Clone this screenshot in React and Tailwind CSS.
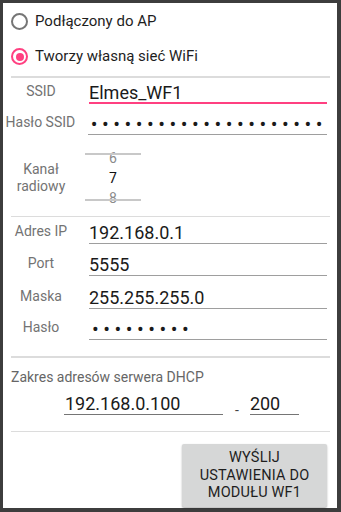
import React from "react";

function Radio({ checked, label, className }) {
  return (
    <div className={"flex items-center " + className}>
      <div
        className={
          "ml-[8px] w-[17px] h-[17px] rounded-full border-2 flex items-center justify-center " +
          (checked ? "border-[#ff4081]" : "border-[#757575]")
        }
      >
        {checked && <div className="w-[8px] h-[8px] rounded-full bg-[#ff4081]" />}
      </div>
      <span className="ml-[7px] text-[15px] text-[#1e1e1e]">{label}</span>
    </div>
  );
}

function Divider({ className = "" }) {
  return <div className={"ml-[8px] mr-[7px] h-[1.5px] bg-[#dcdcdc] " + className} />;
}

function Row({ label, value, h, focused, password }) {
  return (
    <div className={"flex items-end pb-[2px] " + h}>
      <div className="w-[76px] mb-[3px] text-center text-[14px] leading-[20px] text-[#737373]">
        {label}
      </div>
      <div
        className={
          "ml-[10px] mr-[10px] flex-1 h-[21px] whitespace-nowrap text-[18px] leading-[20px] text-[#1a1a1a] " +
          (focused ? "border-b-2 border-[#ff4081]" : "border-b border-[#9e9e9e]")
        }
      >
        {password ? (
          <span className="tracking-[4.5px] pl-[3px] text-[20px] leading-[20px]">{"•".repeat(value)}</span>
        ) : (
          value
        )}
      </div>
    </div>
  );
}

export default function App() {
  return (
    <div className="w-[341px] h-[512px] bg-[#3d3d3d] pt-[3px] pl-[3px] pr-[4px] pb-[4px] font-['Roboto',sans-serif]">
      <div className="bg-white h-full flex flex-col">
        <Radio label="Podłączony do AP" className="h-[37px]" />
        <Radio checked label="Tworzy własną sieć WiFi" className="h-[33px]" />
        <Divider className="mt-[3px]" />

        <Row label="SSID" value="Elmes_WF1" h="h-[28px]" focused />
        <Row label="Hasło SSID" value={21} h="h-[31px]" password />

        <div className="flex items-center h-[79px] pt-[3px]">
          <div className="w-[76px] text-center text-[14px] leading-[17px] text-[#737373]">
            Kanał
            <br />
            radiowy
          </div>
          <div className="relative ml-[6px] w-[56px] h-[60px] flex flex-col items-center text-[14px] leading-[20px]">
            <span className="text-[#8a8a8a]">6</span>
            <span className="text-[#111]">7</span>
            <span className="text-[#8a8a8a]">8</span>
            <div className="absolute left-0 right-0 top-[5px] h-[2px] bg-[#c8c8c8]" />
            <div className="absolute left-0 right-0 top-[51px] h-[2px] bg-[#c8c8c8]" />
          </div>
        </div>

        <Divider />

        <Row label="Adres IP" value="192.168.0.1" h="h-[29px]" />
        <Row label="Port" value="5555" h="h-[32px]" />
        <Row label="Maska" value="255.255.255.0" h="h-[33px]" />
        <Row label="Hasło" value={9} h="h-[31px]" password />

        <Divider className="mt-[14px]" />

        <div className="ml-[8px] mt-[11px] text-[14px] leading-[17px] text-[#666]">
          Zakres adresów serwera DHCP
        </div>
        <div className="flex items-end mt-[5px] h-[24px]">
          <div className="ml-[61px] w-[159px] border-b border-[#757575] text-[18px] leading-[20px] text-[#1a1a1a] pl-[1px]">
            192.168.0.100
          </div>
          <span className="ml-[12px] mb-[-2px] text-[14px] leading-[14px] text-[#444]">-</span>
          <div className="ml-[11px] w-[49px] border-b border-[#757575] text-[18px] leading-[20px] text-[#1a1a1a]">
            200
          </div>
        </div>

        <Divider className="mt-[16px]" />

        <div className="flex justify-end mt-[12px] mr-[10px]">
          <button className="w-[145px] h-[63px] rounded-[2px] bg-[#d6d7d7] shadow-[0_1px_2px_rgba(0,0,0,0.3)] text-[14.5px] leading-[17.5px] font-normal tracking-[0.2px] text-[#1e1e1e] uppercase">
            Wyślij
            <br />
            ustawienia do
            <br />
            modułu WF1
          </button>
        </div>
      </div>
    </div>
  );
}
